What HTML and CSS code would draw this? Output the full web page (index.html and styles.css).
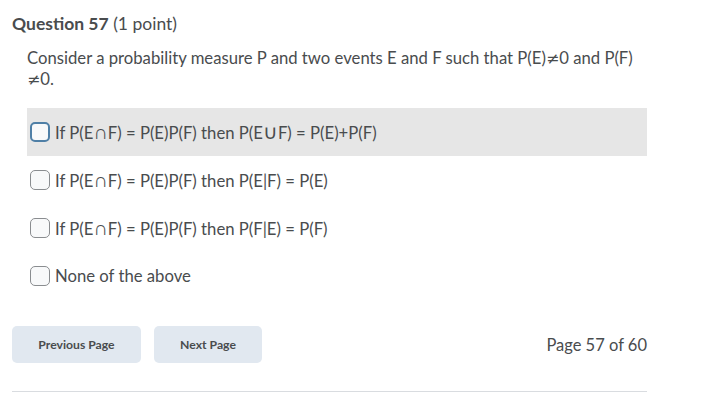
FILE: index.html
```html
<!DOCTYPE html>
<html lang="en">
<head>
<meta charset="utf-8">
<title>Question 57</title>
<link rel="stylesheet" href="styles.css">
</head>
<body>
<main class="page">
  <h2 class="q-title"><strong>Question 57</strong> <span class="q-points">(1 point)</span></h2>
  <div class="q-body">
    <p class="q-text">Consider a probability measure P and two events E and F such that P(E)<span class="sym">≠</span>0 and P(F) <span class="sym">≠</span>0.</p>
    <ul class="options">
      <li class="option is-hover"><span class="check is-focus"></span><span class="opt-label">If P(E<span class="set">∩</span>F) = P(E)P(F) then P(E<span class="set">∪</span>F) = P(E)+P(F)</span></li>
      <li class="option"><span class="check"></span><span class="opt-label">If P(E<span class="set">∩</span>F) = P(E)P(F) then P(E|F) = P(E)</span></li>
      <li class="option"><span class="check"></span><span class="opt-label">If P(E<span class="set">∩</span>F) = P(E)P(F) then P(F|E) = P(F)</span></li>
      <li class="option"><span class="check"></span><span class="opt-label">None of the above</span></li>
    </ul>
  </div>
  <div class="nav">
    <button class="btn btn-prev">Previous Page</button>
    <button class="btn btn-next">Next Page</button>
    <span class="page-count">Page 57 of 60</span>
  </div>
  <hr class="divider">
</main>
</body>
</html>
```

FILE: styles.css
```css
html, body {
  margin: 0;
  padding: 0;
  background: #ffffff;
}
body {
  font-family: Lato, "Open Sans", sans-serif;
  color: #494c4e;
  width: 717px;
  height: 402px;
  overflow: hidden;
}
.page {
  width: 635px;
  padding: 12px 0 0 12px;
}
.q-title {
  margin: 0;
  font-size: 17.5px;
  line-height: 24px;
  font-weight: 400;
}
.q-title strong {
  font-weight: 700;
}
.q-body {
  padding-left: 15px;
  margin-top: 12px;
}
.q-text {
  margin: 0;
  font-size: 16.7px;
  line-height: 21px;
}
.sym {
  font-family: "DejaVu Sans", sans-serif;
  font-size: 0.95em;
}
.set {
  font-family: "DejaVu Sans", sans-serif;
  font-weight: 200;
  font-size: 1.2em;
  line-height: 1;
}
.options {
  list-style: none;
  margin: 18px 0 0;
  padding: 0;
}
.option {
  display: flex;
  align-items: center;
  gap: 5px;
  height: 48px;
  padding-left: 3px;
  font-size: 16.7px;
}
.option.is-hover {
  background: #e6e6e6;
}
.check {
  box-sizing: border-box;
  width: 20px;
  height: 20px;
  border: 1px solid #8a8d90;
  border-radius: 5px;
  background: #f8f9fa;
  flex: none;
}
.check.is-focus {
  border: 2px solid #4f7fa6;
}
.nav {
  display: flex;
  align-items: center;
  gap: 13px;
  margin-top: 26px;
}
.btn {
  font-family: Lato, "Open Sans", sans-serif;
  font-weight: 700;
  font-size: 12.2px;
  color: #494c4e;
  background: #e1e8f0;
  border: none;
  border-radius: 5px;
  height: 37px;
  padding: 0;
}
.btn-prev { width: 129px; }
.btn-next { width: 108px; }
.page-count {
  margin-left: auto;
  font-size: 16.5px;
}
.divider {
  margin: 28px 0 0;
  border: none;
  border-top: 1px solid #d9dce0;
  height: 0;
}
```
